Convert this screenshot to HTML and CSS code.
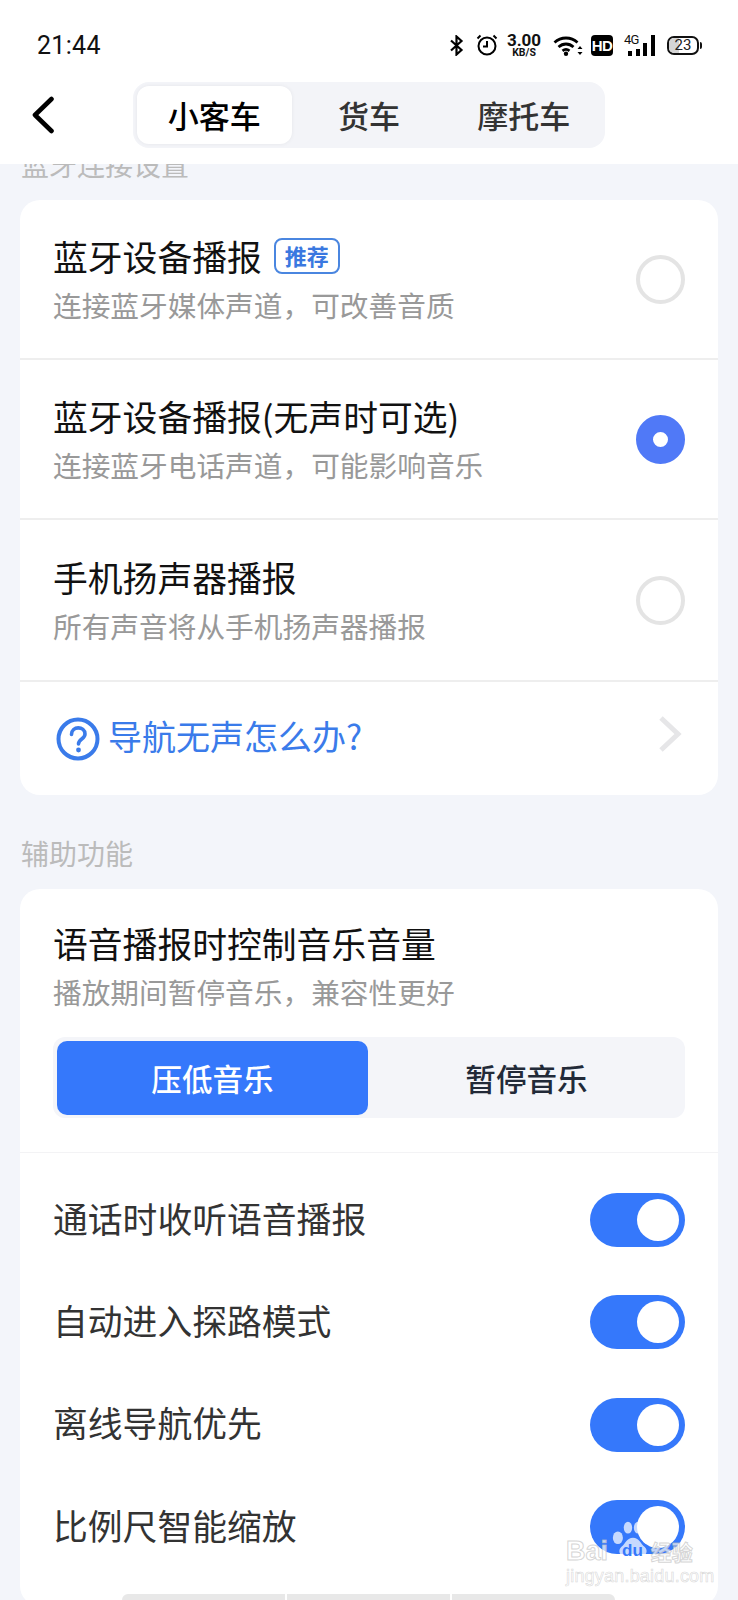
FILE: index.html
```html
<!DOCTYPE html>
<html lang="zh-CN">
  <head>
    <meta charset="UTF-8" />
    <meta name="viewport" content="width=device-width, initial-scale=1.0" />
    <title>导航语音设置</title>
    <link rel="stylesheet" href="styles.css">
  </head>
  <body>
    <header class="top">
      <!-- Status bar -->
      <div class="status">
        <span class="time">21:44</span>
        <div class="status-icons">
          <svg class="ic-bt" viewBox="0 0 16 21" width="16" height="21"><path d="M2 5.500 12.500 15 7.500 19.500V1.500L12.500 6 2 15.500" fill="none" stroke="#000" stroke-width="2.200"/></svg>
          <svg class="ic-alarm" viewBox="0 0 22 22" width="22" height="22"><circle cx="11" cy="12" r="8.500" fill="none" stroke="#000" stroke-width="2"/><path d="M11 7v5.500H7M1.500 4.500 4.500 1.500M20.500 4.500 17.500 1.500" fill="none" stroke="#000" stroke-width="2"/></svg>
          <div class="speed"><span class="speed-num">3.00</span><span class="speed-unit">KB/S</span></div>
          <svg class="ic-wifi" viewBox="0 0 30 21" width="30" height="21"><path d="M1.500 7.500C8 1.500 18 1.500 24.500 7.500M5.500 12C10 8 16 8 20.500 12M9.500 15.800C11.800 14 14.200 14 16.500 15.800" fill="none" stroke="#000" stroke-width="2.800"/><circle cx="13" cy="18.800" r="2.200"/><path d="M27 11l2.500 3h-5zM27 20l2.500-3h-5z"/></svg>
          <span class="hd">HD</span>
          <div class="signal">
            <span class="net">4G</span>
            <i class="bar b1"></i><i class="bar b2"></i><i class="bar b3"></i><i class="bar b4"></i>
          </div>
          <div class="battery"><i class="battery-fill"></i><span class="battery-num">23</span></div>
        </div>
      </div>

      <!-- Nav with vehicle tabs -->
      <nav class="nav">
        <svg class="back" viewBox="0 0 24 38" width="24" height="38"><path d="M20.500 3 4 19l16.500 16" fill="none" stroke="#000" stroke-width="4.600" stroke-linecap="round" stroke-linejoin="round"/></svg>
        <div class="tabs">
          <span class="tab tab-on">小客车</span>
          <span class="tab">货车</span>
          <span class="tab">摩托车</span>
        </div>
      </nav>
    </header>

    <main class="content">
      <h2 class="label label-first">蓝牙连接设置</h2>
      <section class="card">
        <div class="row">
          <div class="row-text">
            <div class="title">蓝牙设备播报<span class="badge">推荐</span></div>
            <div class="sub">连接蓝牙媒体声道，可改善音质</div>
          </div>
          <span class="radio"></span>
        </div>
        <div class="row">
          <div class="row-text">
            <div class="title">蓝牙设备播报(无声时可选)</div>
            <div class="sub">连接蓝牙电话声道，可能影响音乐</div>
          </div>
          <span class="radio radio-on"></span>
        </div>
        <div class="row row-last">
          <div class="row-text">
            <div class="title">手机扬声器播报</div>
            <div class="sub">所有声音将从手机扬声器播报</div>
          </div>
          <span class="radio"></span>
        </div>
        <div class="help">
          <svg class="help-icon" viewBox="0 0 44 44" width="44" height="44"><circle cx="22" cy="22" r="19.500" fill="none" stroke="#3a7bea" stroke-width="4"/><path d="M15.500 17.500c0-9 13.500-8.500 13.500-.5 0 5-6.500 5-6.500 10" fill="none" stroke="#3a7bea" stroke-width="3.600" stroke-linecap="round"/><circle cx="22.500" cy="33" r="2.400" fill="#3a7bea"/></svg>
          <span class="help-text">导航无声怎么办?</span>
          <svg class="chevron" viewBox="0 0 24 36" width="24" height="36"><path d="M3 2l17 16L3 34" fill="none" stroke="#e6e6e8" stroke-width="5"/></svg>
        </div>
      </section>

      <h2 class="label">辅助功能</h2>
      <section class="card">
        <div class="volume">
          <div class="title">语音播报时控制音乐音量</div>
          <div class="sub">播放期间暂停音乐，兼容性更好</div>
          <div class="segment">
            <span class="seg seg-on">压低音乐</span>
            <span class="seg">暂停音乐</span>
          </div>
        </div>
        <div class="switches">
          <div class="switch-row"><span class="switch-title">通话时收听语音播报</span><span class="toggle"></span></div>
          <div class="switch-row"><span class="switch-title">自动进入探路模式</span><span class="toggle"></span></div>
          <div class="switch-row"><span class="switch-title">离线导航优先</span><span class="toggle"></span></div>
          <div class="switch-row"><span class="switch-title">比例尺智能缩放</span><span class="toggle"></span></div>
        </div>
        <div class="bottom-bars"><i></i><i></i><i></i></div>
      </section>
    </main>

    <!-- Baidu watermark sits over the page -->
    <div class="watermark">
      <svg class="paw" viewBox="0 0 50 44" width="42" height="37"><g fill="#fff" fill-opacity=".72"><ellipse cx="7" cy="20" rx="6" ry="7.500"/><ellipse cx="19" cy="8" rx="5" ry="7"/><ellipse cx="31" cy="8" rx="5" ry="7"/><ellipse cx="42" cy="20" rx="6" ry="7.500"/><path d="M25 20c7 0 9 7 14 11 5 5 1 12-6 11-4-.5-5-1.500-8-1.500S21 41.500 17 42c-7 1-11-6-6-11 5-4 7-11 14-11z"/></g></svg>
      <div class="wm-brand"><span>Bai</span><span class="wm-du">du</span><span class="wm-cn">经验</span></div>
      <div class="wm-url">jingyan.baidu.com</div>
    </div>
  </body>
</html>
```

FILE: styles.css
```css
body {
  margin: 0;
  width: 738px;
  height: 1600px;
  overflow: hidden;
  position: relative;
  background-color: #f3f5fa;
  font-family: "Noto Sans CJK SC", "Noto Sans", sans-serif;
}
h2 {
  margin: 0;
  font-weight: 400;
}

/* header */
.top {
  height: 164px;
  background-color: #fff;
  position: relative;
  z-index: 1;
}
.status {
  height: 82px;
  box-sizing: border-box;
  padding: 8px 37px 0 37px;
  display: flex;
  justify-content: space-between;
  align-items: center;
}
.time {
  font-family: Roboto, sans-serif;
  font-size: 25px;
  letter-spacing: 0.3px;
  color: #111;
}
.status-icons {
  display: flex;
  align-items: center;
}
.ic-alarm {
  margin-left: 11px;
}
.speed {
  margin-left: 9px;
  width: 34px;
  display: flex;
  flex-direction: column;
  align-items: center;
  font-family: Roboto, sans-serif;
  font-weight: 700;
  color: #111;
}
.speed-num {
  font-size: 17px;
  line-height: 14px;
}
.speed-unit {
  font-size: 10.500px;
  line-height: 11px;
}
.ic-wifi {
  margin-left: 12px;
}
.hd {
  margin-left: 8px;
  width: 22px;
  height: 21px;
  border-radius: 4px;
  background-color: #000;
  color: #fff;
  font-family: "Liberation Sans", sans-serif;
  font-size: 15px;
  font-weight: 700;
  letter-spacing: -0.5px;
  line-height: 21px;
  text-align: center;
}
.signal {
  margin-left: 11px;
  width: 31px;
  height: 21px;
  position: relative;
}
.net {
  position: absolute;
  left: 0;
  top: -1px;
  font-family: Roboto, sans-serif;
  font-size: 13px;
  letter-spacing: -0.8px;
  line-height: 12px;
  color: #111;
}
.bar {
  position: absolute;
  bottom: 0;
  width: 4px;
  background-color: #000;
}
.b1 { left: 4px; height: 5px; }
.b2 { left: 12px; height: 7px; }
.b3 { left: 19px; height: 13px; }
.b4 { left: 27px; height: 21px; }
.battery {
  margin-left: 12px;
  margin-right: 2px;
  width: 28px;
  height: 15px;
  border: 2px solid #111;
  border-radius: 7px;
  position: relative;
  display: flex;
  align-items: center;
  justify-content: center;
}
.battery::after {
  content: "";
  position: absolute;
  right: -5px;
  top: 4px;
  width: 2px;
  height: 7px;
  border-radius: 0 2px 2px 0;
  background-color: #111;
}
.battery-fill {
  position: absolute;
  left: 0;
  top: 0;
  bottom: 0;
  width: 10px;
  border-radius: 5px 0 0 5px;
  background-color: #d5d5d5;
}
.battery-num {
  position: relative;
  font-family: Roboto, sans-serif;
  font-size: 15px;
  line-height: 15px;
  color: #222;
}
.nav {
  height: 66px;
  display: flex;
  align-items: center;
}
.back {
  margin-left: 31px;
  margin-right: 78px;
}
.tabs {
  width: 472px;
  height: 66px;
  box-sizing: border-box;
  padding: 4px;
  border-radius: 16px;
  background-color: #f3f4f8;
  display: grid;
  grid-template-columns: repeat(3, 1fr);
}
.tab {
  font-size: 31px;
  font-weight: 500;
  line-height: 58px;
  text-align: center;
  color: #333;
}
.tab-on {
  background-color: #fff;
  border-radius: 12px;
  color: #000;
  box-shadow: 0 0 4px rgba(0, 0, 0, 0.06);
}

/* content */
.content {
  padding: 0 20px;
}
.label {
  margin: 38px 0 16px;
  padding-left: 1px;
  font-size: 28px;
  line-height: 40px;
  color: #bbb;
}
.label-first {
  margin-top: -20px;
}
.card {
  background-color: #fff;
  border-radius: 20px;
}
.row {
  height: 160px;
  box-sizing: border-box;
  padding: 0 33px;
  border-bottom: 2px solid #eee;
  display: flex;
  align-items: center;
  justify-content: space-between;
}
.row-last {
  height: 162px;
}
.title {
  font-size: 34.800px;
  line-height: 44px;
  color: #111;
  display: flex;
  align-items: center;
}
.sub {
  margin-top: 7px;
  font-size: 28.700px;
  line-height: 40px;
  color: #999;
}
.badge {
  margin-left: 12px;
  padding: 0 9px;
  height: 32px;
  border: 2px solid #4a86e0;
  border-radius: 8px;
  font-size: 22px;
  font-weight: 700;
  line-height: 31px;
  color: #3a78e0;
}
.radio {
  width: 49px;
  height: 49px;
  box-sizing: border-box;
  border: 4px solid #e4e4e4;
  border-radius: 50%;
}
.radio-on {
  border: 17.500px solid #5079f7;
  background-color: #fff;
}
.help {
  height: 113px;
  padding: 0 36px;
  display: flex;
  align-items: center;
}
.help-text {
  margin-left: 8px;
  padding-bottom: 6px;
  font-size: 34px;
  color: #3a7bea;
}
.chevron {
  margin-left: auto;
  margin-bottom: 10px;
}

/* volume block */
.volume {
  height: 264px;
  box-sizing: border-box;
  padding: 32px 33px 0;
  border-bottom: 1px solid #f3f3f5;
}
.segment {
  margin-top: 25px;
  height: 81px;
  box-sizing: border-box;
  padding: 4px 0 3px 4px;
  border-radius: 12px;
  background-color: #f4f5f9;
  display: grid;
  grid-template-columns: 311px 1fr;
}
.seg {
  font-size: 30.600px;
  font-weight: 500;
  line-height: 74px;
  text-align: center;
  color: #222a38;
}
.seg-on {
  border-radius: 10px;
  background-color: #3578fb;
  color: #fff;
}

/* switches */
.switches {
  padding: 16px 33px 0;
}
.switch-row {
  height: 102.300px;
  display: flex;
  align-items: center;
  justify-content: space-between;
}
.switch-title {
  padding-bottom: 5px;
  font-size: 34.800px;
  color: #333;
}
.toggle {
  width: 95px;
  height: 54px;
  box-sizing: border-box;
  padding: 6px;
  border-radius: 27px;
  background-color: #3578fb;
  display: flex;
  justify-content: flex-end;
}
.toggle::after {
  content: "";
  width: 42px;
  height: 42px;
  border-radius: 50%;
  background-color: #fff;
}
.bottom-bars {
  margin: 16px 0 0 102px;
  display: flex;
  gap: 2px;
}
.bottom-bars i {
  width: 163px;
  height: 12px;
  background-color: #e8e8e8;
}
.bottom-bars i:first-child {
  border-top-left-radius: 6px;
}
.bottom-bars i:last-child {
  border-top-right-radius: 6px;
}

/* watermark */
.watermark {
  position: absolute;
  left: 566px;
  top: 1536px;
  width: 134px;
  height: 50px;
}
.paw {
  position: absolute;
  left: 46px;
  top: -15px;
}
.wm-brand {
  position: absolute;
  left: 0;
  top: 0;
  display: flex;
  align-items: center;
  white-space: nowrap;
  font-family: "Liberation Sans", sans-serif;
  font-size: 27px;
  font-weight: 700;
  line-height: 30px;
  color: rgba(255, 255, 255, 0.7);
  -webkit-text-stroke: 1px rgba(190, 190, 190, 0.65);
}
.wm-du {
  margin-left: 14px;
  font-size: 17px;
  color: #3578fb;
  -webkit-text-stroke: 0;
}
.wm-cn {
  margin-left: 8px;
  font-family: "Noto Sans CJK SC", sans-serif;
  font-size: 21px;
}
.wm-url {
  position: absolute;
  left: 0;
  top: 30px;
  font-family: "Liberation Sans", sans-serif;
  font-size: 18px;
  line-height: 20px;
  letter-spacing: 0.2px;
  white-space: nowrap;
  color: rgba(255, 255, 255, 0.7);
  -webkit-text-stroke: 0.6px rgba(190, 190, 190, 0.6);
}
```
